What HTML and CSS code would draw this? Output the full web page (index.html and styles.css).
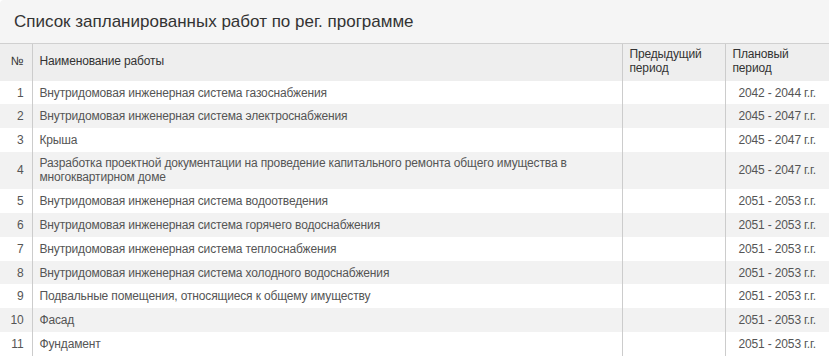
FILE: index.html
```html
<!DOCTYPE html>
<html lang="ru">
<head>
<meta charset="utf-8">
<title>Список запланированных работ</title>
<link rel="stylesheet" href="styles.css">
</head>
<body>
<div class="panel">
  <div class="panel-title">Список запланированных работ по рег. программе</div>
  <table class="works">
    <colgroup>
      <col class="c-num"><col class="c-name"><col class="c-prev"><col class="c-plan">
    </colgroup>
    <thead>
      <tr><th class="num">№</th><th>Наименование работы</th><th>Предыдущий<br>период</th><th>Плановый<br>период</th></tr>
    </thead>
    <tbody>
      <tr><td class="num">1</td><td>Внутридомовая инженерная система газоснабжения</td><td></td><td class="plan">2042 - 2044 г.г.</td></tr>
      <tr><td class="num">2</td><td>Внутридомовая инженерная система электроснабжения</td><td></td><td class="plan">2045 - 2047 г.г.</td></tr>
      <tr><td class="num">3</td><td>Крыша</td><td></td><td class="plan">2045 - 2047 г.г.</td></tr>
      <tr class="tall"><td class="num">4</td><td>Разработка проектной документации на проведение капитального ремонта общего имущества в многоквартирном доме</td><td></td><td class="plan">2045 - 2047 г.г.</td></tr>
      <tr><td class="num">5</td><td>Внутридомовая инженерная система водоотведения</td><td></td><td class="plan">2051 - 2053 г.г.</td></tr>
      <tr><td class="num">6</td><td>Внутридомовая инженерная система горячего водоснабжения</td><td></td><td class="plan">2051 - 2053 г.г.</td></tr>
      <tr><td class="num">7</td><td>Внутридомовая инженерная система теплоснабжения</td><td></td><td class="plan">2051 - 2053 г.г.</td></tr>
      <tr><td class="num">8</td><td>Внутридомовая инженерная система холодного водоснабжения</td><td></td><td class="plan">2051 - 2053 г.г.</td></tr>
      <tr><td class="num">9</td><td>Подвальные помещения, относящиеся к общему имуществу</td><td></td><td class="plan">2051 - 2053 г.г.</td></tr>
      <tr><td class="num">10</td><td>Фасад</td><td></td><td class="plan">2051 - 2053 г.г.</td></tr>
      <tr><td class="num">11</td><td>Фундамент</td><td></td><td class="plan">2051 - 2053 г.г.</td></tr>
    </tbody>
  </table>
</div>
</body>
</html>
```
FILE: styles.css
```css
html, body {
  margin: 0;
  padding: 0;
  background: #ffffff;
}
body {
  font-family: "Liberation Sans", Arial, sans-serif;
}
.panel {
  width: 100%;
}
.panel-title {
  background: #f5f5f5;
  color: #333333;
  font-size: 17px;
  line-height: 20px;
  padding: 12px 14px 11px;
  border-bottom: 1px solid #d0d0d0;
  border-top-left-radius: 4px;
}
.works {
  width: 100%;
  border-collapse: collapse;
  font-size: 12px;
  line-height: 13.75px;
  letter-spacing: -0.15px;
  table-layout: fixed;
}
.c-num { width: 32px; }
.c-prev { width: 103px; }
.c-plan { width: 104px; }
.works th {
  background: #eeeeee;
  color: #333333;
  font-weight: normal;
  text-align: left;
  vertical-align: middle;
  padding: 4px 7px 5px;
  border-left: 1px solid #cccccc;
}
.works td {
  color: #555555;
  padding: 6px 7px 4px;
  vertical-align: middle;
  border-left: 1px solid #cccccc;
}
.works tr.tall td {
  padding-top: 5px;
  padding-bottom: 5px;
}
.works th:first-child,
.works td:first-child {
  border-left: none;
}
.works .num {
  text-align: right;
  padding-right: 8px;
}
.works td.plan {
  text-align: center;
  padding-left: 2px;
  padding-right: 2px;
}
.works tbody tr:nth-child(even) td {
  background: #f2f2f2;
}
```
